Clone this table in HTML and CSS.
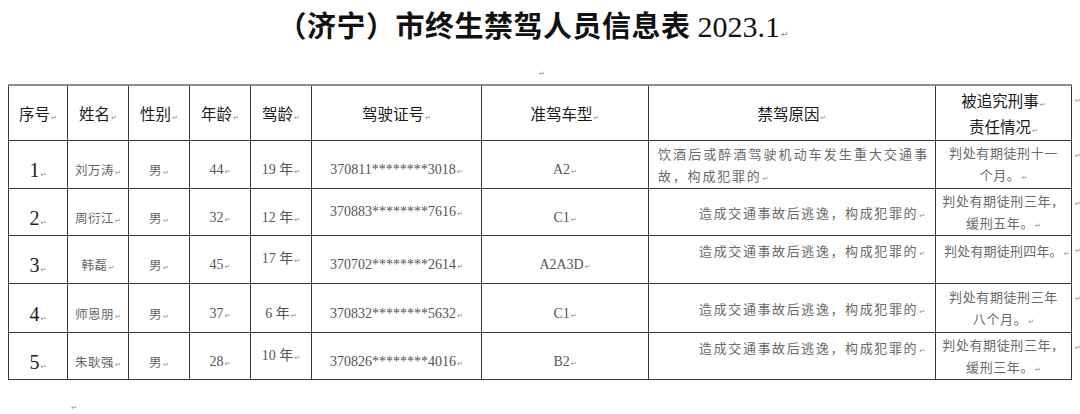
FILE: index.html
```html
<!DOCTYPE html>
<html lang="zh-CN">
<head>
<meta charset="utf-8">
<title>（济宁）市终生禁驾人员信息表 2023.1</title>
<link rel="stylesheet" href="styles.css">
</head>
<body>
<h1 class="title">（济宁）市终生禁驾人员信息表 <span class="num">2023.1</span><i class="pm">↵</i></h1>
<div class="gap"><i class="pm">↵</i></div>
<table class="sheet">
  <colgroup>
    <col class="c-no"><col class="c-name"><col class="c-sex"><col class="c-age"><col class="c-dage">
    <col class="c-lic"><col class="c-type"><col class="c-reason"><col class="c-resp"><col class="c-end">
  </colgroup>
  <thead>
    <tr class="r-head">
      <th>序号<i class="pm">↵</i></th>
      <th>姓名<i class="pm">↵</i></th>
      <th>性别<i class="pm">↵</i></th>
      <th>年龄<i class="pm">↵</i></th>
      <th>驾龄<i class="pm">↵</i></th>
      <th>驾驶证号<i class="pm">↵</i></th>
      <th>准驾车型<i class="pm">↵</i></th>
      <th>禁驾原因<i class="pm">↵</i></th>
      <th class="two">被追究刑事<i class="pm">↵</i><br>责任情况<i class="pm">↵</i></th>
      <td class="end"><i class="pm">↵</i></td>
    </tr>
  </thead>
  <tbody>
    <tr class="r1">
      <td class="no">1<i class="pm">↵</i></td>
      <td class="cn">刘万涛<i class="pm">↵</i></td>
      <td class="cn">男<i class="pm">↵</i></td>
      <td class="sr">44<i class="pm">↵</i></td>
      <td class="sr">19 年<i class="pm">↵</i></td>
      <td class="lic">370811********3018<i class="pm">↵</i></td>
      <td class="sr">A2<i class="pm">↵</i></td>
      <td class="reason just">饮酒后或醉酒驾驶机动车发生重大交通事故，构成犯罪的<i class="pm">↵</i></td>
      <td class="resp">判处有期徒刑十一<br>个月。<i class="pm">↵</i></td>
      <td class="end"><i class="pm">↵</i></td>
    </tr>
    <tr class="r2">
      <td class="no">2<i class="pm">↵</i></td>
      <td class="cn">周衍江<i class="pm">↵</i></td>
      <td class="cn">男<i class="pm">↵</i></td>
      <td class="sr">32<i class="pm">↵</i></td>
      <td class="sr">12 年<i class="pm">↵</i></td>
      <td class="lic mid">370883********7616<i class="pm">↵</i></td>
      <td class="sr">C1<i class="pm">↵</i></td>
      <td class="reason">造成交通事故后逃逸，构成犯罪的<i class="pm">↵</i></td>
      <td class="resp">判处有期徒刑三年，<br>缓刑五年。<i class="pm">↵</i></td>
      <td class="end"><i class="pm">↵</i></td>
    </tr>
    <tr class="r3">
      <td class="no">3<i class="pm">↵</i></td>
      <td class="cn">韩磊<i class="pm">↵</i></td>
      <td class="cn">男<i class="pm">↵</i></td>
      <td class="sr">45<i class="pm">↵</i></td>
      <td class="sr mid">17 年<i class="pm">↵</i></td>
      <td class="lic">370702********2614<i class="pm">↵</i></td>
      <td class="sr">A2A3D<i class="pm">↵</i></td>
      <td class="reason up">造成交通事故后逃逸，构成犯罪的<i class="pm">↵</i></td>
      <td class="resp up">判处有期徒刑四年。<i class="pm">↵</i></td>
      <td class="end"><i class="pm">↵</i></td>
    </tr>
    <tr class="r4">
      <td class="no">4<i class="pm">↵</i></td>
      <td class="cn">师恩朋<i class="pm">↵</i></td>
      <td class="cn">男<i class="pm">↵</i></td>
      <td class="sr">37<i class="pm">↵</i></td>
      <td class="sr">6 年<i class="pm">↵</i></td>
      <td class="lic">370832********5632<i class="pm">↵</i></td>
      <td class="sr">C1<i class="pm">↵</i></td>
      <td class="reason">造成交通事故后逃逸，构成犯罪的<i class="pm">↵</i></td>
      <td class="resp">判处有期徒刑三年<br>八个月。<i class="pm">↵</i></td>
      <td class="end"><i class="pm">↵</i></td>
    </tr>
    <tr class="r5">
      <td class="no">5<i class="pm">↵</i></td>
      <td class="cn">朱耿强<i class="pm">↵</i></td>
      <td class="cn">男<i class="pm">↵</i></td>
      <td class="sr">28<i class="pm">↵</i></td>
      <td class="sr mid">10 年<i class="pm">↵</i></td>
      <td class="lic">370826********4016<i class="pm">↵</i></td>
      <td class="sr">B2<i class="pm">↵</i></td>
      <td class="reason up">造成交通事故后逃逸，构成犯罪的<i class="pm">↵</i></td>
      <td class="resp">判处有期徒刑三年，<br>缓刑三年。<i class="pm">↵</i></td>
      <td class="end"><i class="pm">↵</i></td>
    </tr>
  </tbody>
</table>
<div class="tail"><i class="pm">↵</i></div>
</body>
</html>
```
FILE: styles.css
```css
html, body {
  margin: 0;
  padding: 0;
  background: #ffffff;
}
body {
  width: 1080px;
  height: 414px;
  overflow: hidden;
  padding: 0 0 0 8px;
  box-sizing: border-box;
  font-family: "Noto Sans CJK SC", "Liberation Sans", sans-serif;
  color: #222;
}
.pm {
  font-style: normal;
  font-family: "DejaVu Sans", sans-serif;
  font-size: 7px;
  line-height: 0;
  color: #8a8a8a;
  margin-left: 1px;
  font-weight: 400;
  letter-spacing: 0;
}
.title {
  margin: 0;
  height: 48px;
  line-height: 48px;
  font-size: 29px;
  font-weight: 700;
  text-align: center;
  padding-right: 22px;
  color: #111;
  letter-spacing: 0.5px;
  font-family: "Noto Sans CJK SC", "Liberation Serif", serif;
}
.title .num {
  font-family: "Liberation Serif", serif;
  font-weight: 400;
  font-size: 30px;
  letter-spacing: 0;
}
.title .pm {
  font-size: 9px;
}
.gap {
  height: 36px;
  box-sizing: border-box;
  padding: 16px 0 0 530px;
  line-height: 10px;
}
.sheet {
  width: 1072px;
  table-layout: fixed;
  border-collapse: collapse;
}
.c-no { width: 59px; }
.c-name, .c-sex, .c-age, .c-dage { width: 61px; }
.c-lic { width: 170px; }
.c-type { width: 167px; }
.c-reason { width: 287px; }
.c-resp { width: 136px; }
.c-end { width: 9px; }

.sheet th,
.sheet td {
  border: 1px solid #3a3a3a;
  padding: 0;
  text-align: center;
  vertical-align: middle;
}
.sheet thead th {
  border-top: 2px solid #8a8a8a;
}
.sheet td.end {
  border: none;
  vertical-align: top;
  text-align: left;
  padding: 6px 0 0 2px;
  line-height: 10px;
}
.r-head { height: 55px; }
.r1 { height: 48px; }
.r2 { height: 47px; }
.r3 { height: 48px; }
.r4 { height: 49px; }
.r5 { height: 47px; }

.sheet th {
  font-weight: 400;
  font-size: 15.5px;
  color: #1a1a1a;
  line-height: 26px;
}
.sheet th.two {
  padding-top: 1px;
}
.sheet tbody td {
  padding-top: 12px;
  line-height: 20px;
}
.no {
  font-family: "Liberation Serif", serif;
  font-size: 20px;
  color: #1a1a1a;
}
.cn {
  font-size: 12.5px;
  color: #666;
  letter-spacing: 0.5px;
}
.sr {
  font-family: "Liberation Serif", "Noto Sans CJK SC", serif;
  font-size: 14px;
  color: #555;
}
.lic {
  font-family: "Liberation Serif", serif;
  font-size: 14px;
  color: #555;
}
.sheet tbody td.mid {
  padding-top: 0;
}
.sheet tbody td.reason {
  padding: 2px 10px 0 9px;
  font-size: 13px;
  color: #6a6a6a;
  letter-spacing: 1.6px;
  line-height: 22px;
  text-align: right;
}
.sheet tbody td.reason.just {
  text-align: justify;
  text-align-last: left;
  letter-spacing: 1.8px;
  padding-right: 6px;
}
.sheet tbody td.resp {
  padding: 0 2px;
  font-size: 13px;
  color: #6a6a6a;
  letter-spacing: 0.6px;
  line-height: 22px;
  white-space: nowrap;
}
.sheet tbody td.up {
  padding-top: 0;
  padding-bottom: 16px;
}
.sheet tbody td.resp.up {
  text-align: left;
  padding-left: 8px;
  letter-spacing: 0.2px;
}
.tail {
  padding: 18px 0 0 62px;
  line-height: 10px;
}
```
